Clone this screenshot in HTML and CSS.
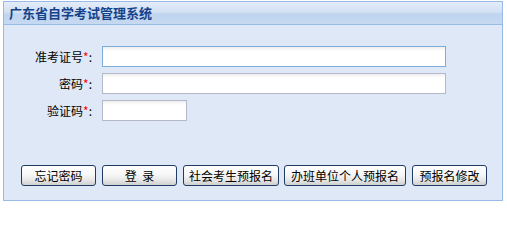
FILE: index.html
```html
<!DOCTYPE html>
<html lang="zh-CN">
<head>
<meta charset="utf-8">
<title>广东省自学考试管理系统</title>
<link rel="stylesheet" href="styles.css">
</head>
<body>
<div class="panel">
  <div class="panel-header">广东省自学考试管理系统</div>
  <div class="panel-body">
    <div class="form">
      <label class="label">准考证号<span class="req">*</span>:</label>
      <input class="field wide focus" type="text">
      <label class="label">密码<span class="req">*</span>:</label>
      <input class="field wide" type="password">
      <label class="label">验证码<span class="req">*</span>:</label>
      <input class="field short" type="text">
    </div>
    <div class="buttons">
      <button class="btn">忘记密码</button>
      <button class="btn">登&nbsp;&nbsp;录</button>
      <button class="btn">社会考生预报名</button>
      <button class="btn">办班单位个人预报名</button>
      <button class="btn">预报名修改</button>
    </div>
  </div>
</div>
</body>
</html>
```
FILE: styles.css
```css
html, body {
  margin: 0;
  padding: 0;
  background: #ffffff;
}
body {
  padding: 1px 0 0 3px;
  font-family: "Noto Sans CJK SC", "Liberation Sans", sans-serif;
  font-size: 12px;
  color: #000;
}
.panel {
  width: 498px;
  height: 198px;
  border: 1px solid #99bbe8;
  background: #dfe8f6;
  display: flex;
  flex-direction: column;
}
.panel-header {
  height: 22px;
  line-height: 22px;
  padding-left: 5px;
  border-bottom: 1px solid #99bbe8;
  background: linear-gradient(#e3ecf8 0%, #d3e1f4 45%, #bfd4ef 55%, #c6d9f1 100%);
  color: #15428b;
  font-weight: bold;
  font-size: 13px;
  letter-spacing: 0;
}
.panel-body {
  flex: 1;
  display: flex;
  flex-direction: column;
  padding-top: 21px;
}
.form {
  display: grid;
  grid-template-columns: 88px auto;
  row-gap: 6px;
  align-items: center;
  justify-items: start;
}
.label {
  justify-self: end;
  text-align: right;
  line-height: 20px;
  color: #000;
}
.req {
  color: #ff0000;
}
.field {
  box-sizing: border-box;
  height: 21px;
  margin: 0 0 0 10px;
  padding: 0 3px;
  border: 1px solid #b5b8c8;
  background: linear-gradient(#eeeeee 0px, #ffffff 4px, #ffffff 100%);
  font-family: inherit;
  font-size: 12px;
  outline: none;
}
.field.wide {
  width: 344px;
}
.field.short {
  width: 85px;
}
.field.focus {
  border-color: #7eadd9;
}
.buttons {
  display: flex;
  gap: 6px;
  margin-top: 44px;
  padding-left: 17px;
}
.btn {
  box-sizing: border-box;
  min-width: 75px;
  height: 21px;
  padding: 0 6px;
  border: 1px solid #1f3d63;
  border-radius: 3px;
  background: linear-gradient(#ffffff 0%, #f7f7f7 45%, #e6e6e6 75%, #cfcfcf 100%);
  font-family: inherit;
  font-size: 12px;
  line-height: 19px;
  color: #000;
  white-space: nowrap;
}
.btn:nth-child(3) {
  padding: 0 5px;
}
.btn:nth-child(4) {
  margin-left: -1px;
}
```
